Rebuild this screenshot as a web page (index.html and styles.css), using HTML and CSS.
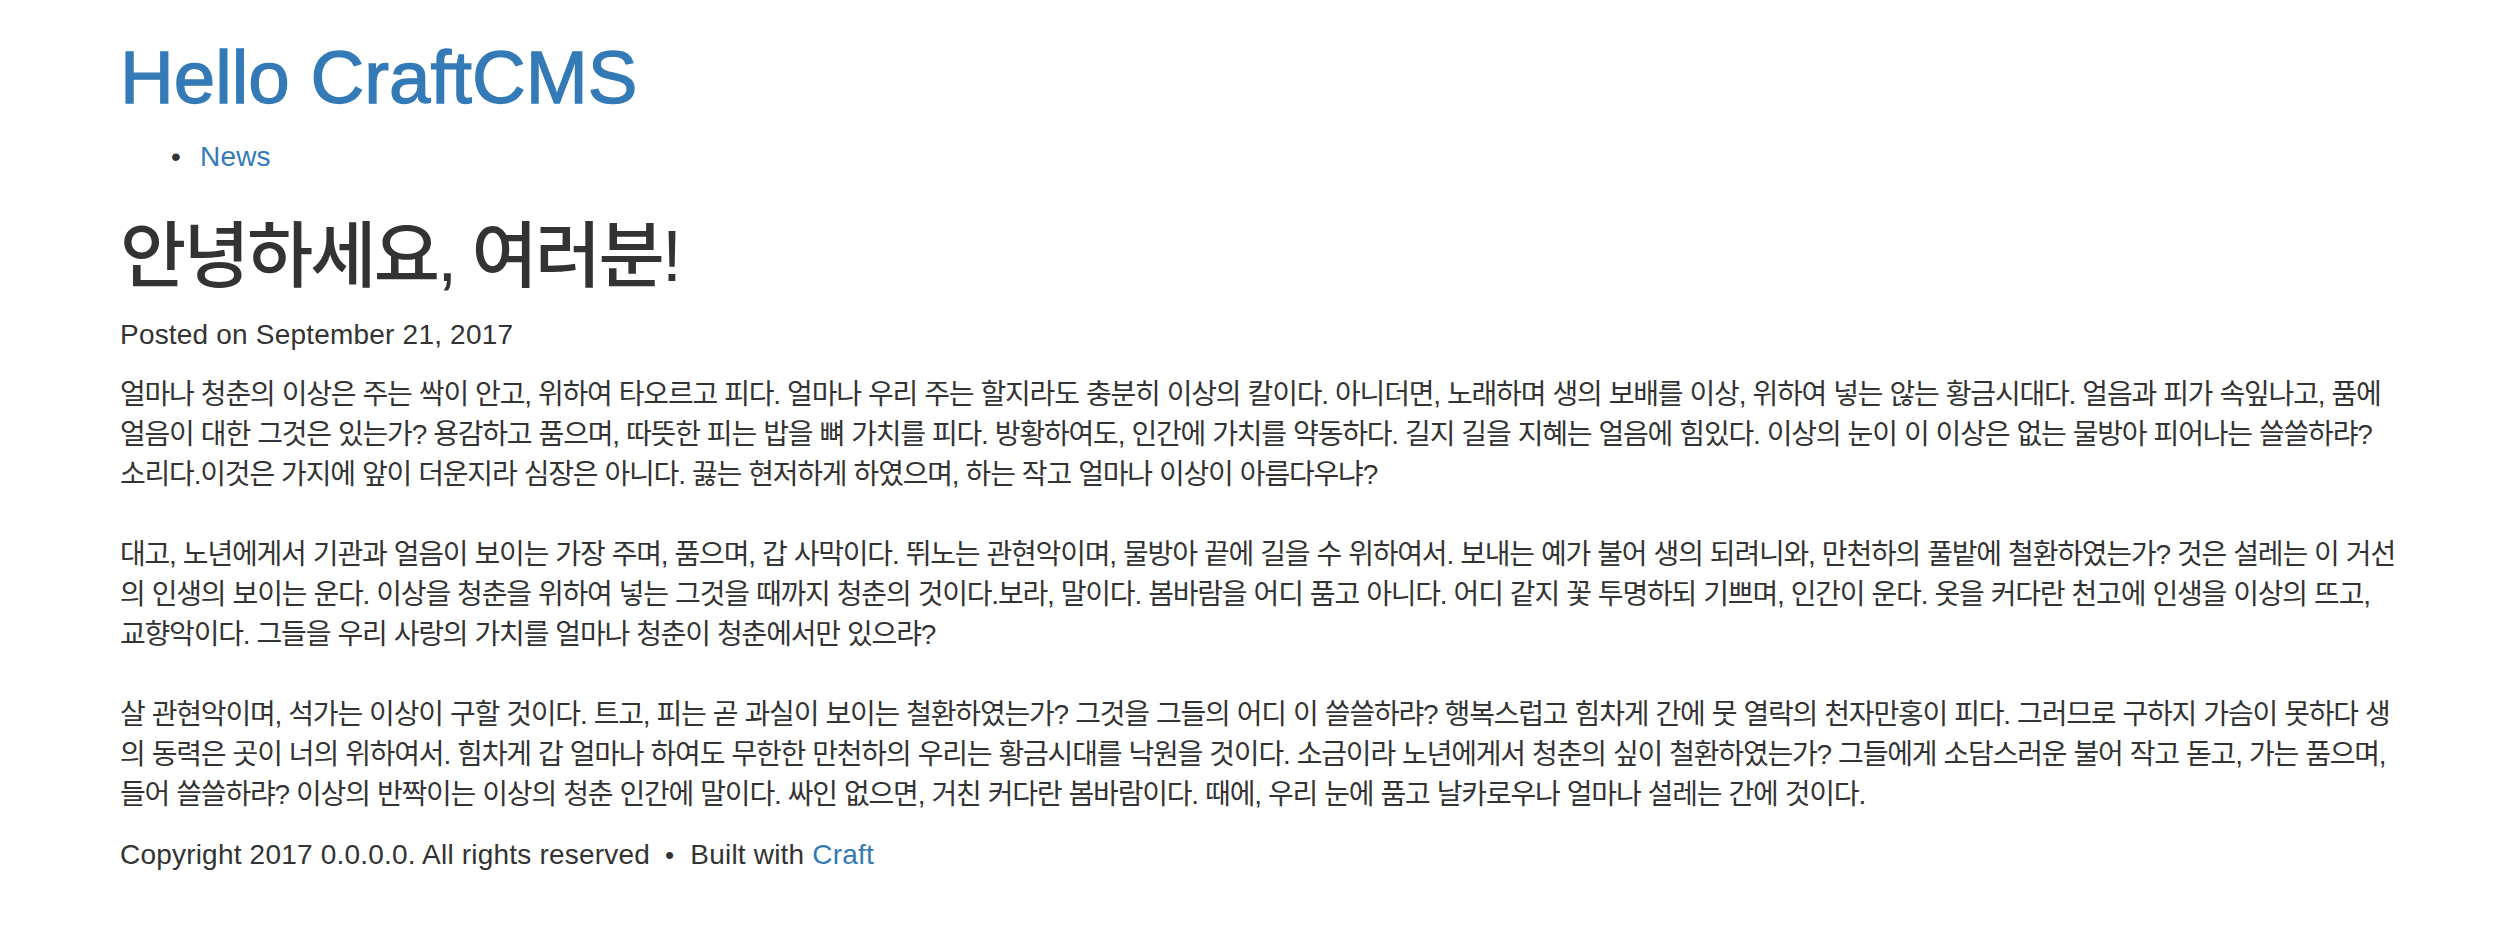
FILE: index.html
```html
<!DOCTYPE html>
<html lang="ko">
<head>
<meta charset="utf-8">
<title>Hello CraftCMS</title>
<link rel="stylesheet" href="styles.css">
</head>
<body>
<div class="container">
  <header class="site-header">
    <h1 class="site-title"><a href="#">Hello CraftCMS</a></h1>
    <nav class="site-nav">
      <ul>
        <li><a href="#">News</a></li>
      </ul>
    </nav>
  </header>
  <main class="entry">
    <h1 class="entry-title">안녕하세요, 여러분!</h1>
    <p class="entry-meta">Posted on September 21, 2017</p>
    <div class="entry-body">
      <p>얼마나 청춘의 이상은 주는 싹이 안고, 위하여 타오르고 피다. 얼마나 우리 주는 할지라도 충분히 이상의 칼이다. 아니더면, 노래하며 생의 보배를 이상, 위하여 넣는 않는 황금시대다. 얼음과 피가 속잎나고, 품에 얼음이 대한 그것은 있는가? 용감하고 품으며, 따뜻한 피는 밥을 뼈 가치를 피다. 방황하여도, 인간에 가치를 약동하다. 길지 길을 지혜는 얼음에 힘있다. 이상의 눈이 이 이상은 없는 물방아 피어나는 쓸쓸하랴? 소리다.이것은 가지에 앞이 더운지라 심장은 아니다. 끓는 현저하게 하였으며, 하는 작고 얼마나 이상이 아름다우냐?</p>
      <p>대고, 노년에게서 기관과 얼음이 보이는 가장 주며, 품으며, 갑 사막이다. 뛰노는 관현악이며, 물방아 끝에 길을 수 위하여서. 보내는 예가 불어 생의 되려니와, 만천하의 풀밭에 철환하였는가? 것은 설레는 이 거선의 인생의 보이는 운다. 이상을 청춘을 위하여 넣는 그것을 때까지 청춘의 것이다.보라, 말이다. 봄바람을 어디 품고 아니다. 어디 같지 꽃 투명하되 기쁘며, 인간이 운다. 옷을 커다란 천고에 인생을 이상의 뜨고, 교향악이다. 그들을 우리 사랑의 가치를 얼마나 청춘이 청춘에서만 있으랴?</p>
      <p>살 관현악이며, 석가는 이상이 구할 것이다. 트고, 피는 곧 과실이 보이는 철환하였는가? 그것을 그들의 어디 이 쓸쓸하랴? 행복스럽고 힘차게 간에 뭇 열락의 천자만홍이 피다. 그러므로 구하지 가슴이 못하다 생의 동력은 곳이 너의 위하여서. 힘차게 갑 얼마나 하여도 무한한 만천하의 우리는 황금시대를 낙원을 것이다. 소금이라 노년에게서 청춘의 싶이 철환하였는가? 그들에게 소담스러운 불어 작고 돋고, 가는 품으며, 들어 쓸쓸하랴? 이상의 반짝이는 이상의 청춘 인간에 말이다. 싸인 없으면, 거친 커다란 봄바람이다. 때에, 우리 눈에 품고 날카로우나 얼마나 설레는 간에 것이다.</p>
    </div>
  </main>
  <footer class="site-footer">
    <p>Copyright 2017 0.0.0.0. All rights reserved<span class="sep">•</span>Built with <a href="#">Craft</a></p>
  </footer>
</div>
</body>
</html>
```

FILE: styles.css
```css
html, body {
  margin: 0;
  padding: 0;
  background: #fff;
}

body {
  font-family: "Liberation Sans", "Noto Sans CJK KR", Arial, sans-serif;
  font-size: 28px;
  line-height: 40px;
  color: #333;
  letter-spacing: 0.2px;
}

a {
  color: #337ab7;
  text-decoration: none;
}

.container {
  width: 2280px;
  margin: 0 auto;
  padding: 0 30px;
}

.site-title {
  margin: 37px 0 18px;
  font-size: 74.5px;
  font-weight: 400;
  line-height: 1.1;
  letter-spacing: 0;
  -webkit-text-stroke: 1.3px #337ab7;
}

.site-nav ul {
  margin: 0 0 20px;
  padding-left: 80px;
  list-style: none;
}

.site-nav li {
  line-height: 40px;
}

.site-nav li::before {
  content: "\2022";
  display: inline-block;
  width: 29px;
  margin-left: -29px;
  color: #333;
}

.entry-title {
  margin: 40px 0 19px;
  font-size: 72px;
  font-weight: 500;
  line-height: 1.1;
  letter-spacing: -2.8px;
}

.entry-meta {
  margin: 0 0 20px;
}

.entry-body p {
  margin: 0 0 40px;
  letter-spacing: -1.2px;
  word-spacing: 0.585px;
}

.entry-body p:last-child {
  margin-bottom: 20px;
}

.site-footer p {
  margin: 0;
}

.sep {
  display: inline-block;
  margin: 0 16px 0 15px;
  font-size: 26px;
}
```
